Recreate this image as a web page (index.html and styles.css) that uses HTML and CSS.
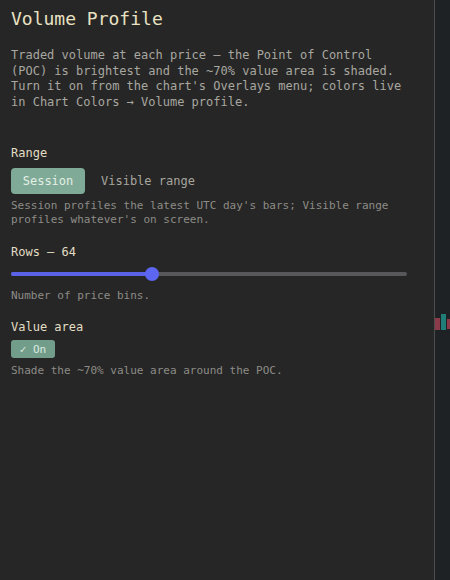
FILE: index.html
```html
<!DOCTYPE html>
<html lang="en">
<head>
    <meta charset="UTF-8">
    <title>Volume Profile</title>
    <link rel="stylesheet" href="styles.css">
</head>
<body>
    <div class="page">
        <div class="panel">
            <h1 class="title">Volume Profile</h1>
            <p class="intro">Traded volume at each price — the Point of Control (POC) is brightest and the ~70% value area is shaded. Turn it on from the chart's Overlays menu; colors live in Chart Colors → Volume profile.</p>

            <div class="field field-range">
                <div class="label">Range</div>
                <div class="seg">
                    <button class="seg-btn active">Session</button>
                    <button class="seg-btn">Visible range</button>
                </div>
                <p class="hint">Session profiles the latest UTC day's bars; Visible range profiles whatever's on screen.</p>
            </div>

            <div class="field field-rows">
                <div class="label">Rows — 64</div>
                <div class="slider">
                    <div class="slider-fill" style="width: 35.6%"></div>
                    <div class="slider-thumb" style="left: 35.6%"></div>
                </div>
                <p class="hint">Number of price bins.</p>
            </div>

            <div class="field field-va">
                <div class="label">Value area</div>
                <button class="toggle">✓ On</button>
                <p class="hint">Shade the ~70% value area around the POC.</p>
            </div>
        </div>
        <div class="chart">
            <span class="candle red" style="left: 0; top: 318px; height: 12px"></span>
            <span class="candle green" style="left: 6px; top: 314px; height: 16px"></span>
            <span class="candle red" style="left: 12px; top: 319px; height: 10px"></span>
        </div>
    </div>
</body>
</html>
```

FILE: styles.css
```css
body {
    margin: 0;
    background-color: #1f2224;
    font-family: "DejaVu Sans Mono", "Liberation Mono", monospace;
}

.page {
    display: flex;
    width: 450px;
    height: 580px;
}

.panel {
    width: 423px;
    height: 580px;
    padding: 0 0 0 11px;
    background-color: #262626;
    border-right: 1px solid #4d4d4d;
}

.title {
    margin: 8px 0 0;
    font-size: 18px;
    line-height: 22px;
    font-weight: normal;
    color: #e8e1c2;
}

.intro {
    margin: 18px 0 0;
    width: 400px;
    font-size: 12px;
    line-height: 15.6px;
    color: #a8a7a0;
}

.label {
    font-size: 12px;
    line-height: 16px;
    color: #e2ddc4;
}

.hint {
    margin: 0;
    font-size: 11px;
    line-height: 14px;
    color: #8d8c87;
}

.field-range {
    margin-top: 35px;
}

.seg {
    display: flex;
    gap: 2px;
    margin: 7px 0 5px;
}

.seg-btn {
    height: 26px;
    padding: 0 14px;
    border: none;
    border-radius: 4px;
    background: none;
    font-family: inherit;
    font-size: 12px;
    color: #a6a59e;
}

.seg-btn.active {
    width: 74px;
    padding: 0;
    background-color: #7faa97;
    color: #e3efe4;
}

.field-rows {
    margin-top: 17px;
}

.slider {
    position: relative;
    width: 396px;
    height: 4px;
    margin: 12px 0 13px;
    border-radius: 2px;
    background-color: #58585a;
}

.slider-fill {
    height: 4px;
    border-radius: 2px;
    background-color: #5a63e8;
}

.slider-thumb {
    position: absolute;
    top: -5px;
    width: 14px;
    height: 14px;
    margin-left: -7px;
    border-radius: 50%;
    background-color: #5d66f0;
}

.field-va {
    margin-top: 16px;
}

.toggle {
    display: block;
    width: 44px;
    height: 18px;
    margin: 5px 0 6px;
    padding: 0;
    border: none;
    border-radius: 3px;
    background-color: #739d8b;
    font-family: inherit;
    font-size: 11px;
    color: #dcebe0;
}

.chart {
    position: relative;
    flex: 1;
    background-color: #1f2224;
}

.candle {
    position: absolute;
    width: 5px;
}

.candle.red {
    background-color: #8a3a48;
}

.candle.green {
    background-color: #1f7f78;
}
```
